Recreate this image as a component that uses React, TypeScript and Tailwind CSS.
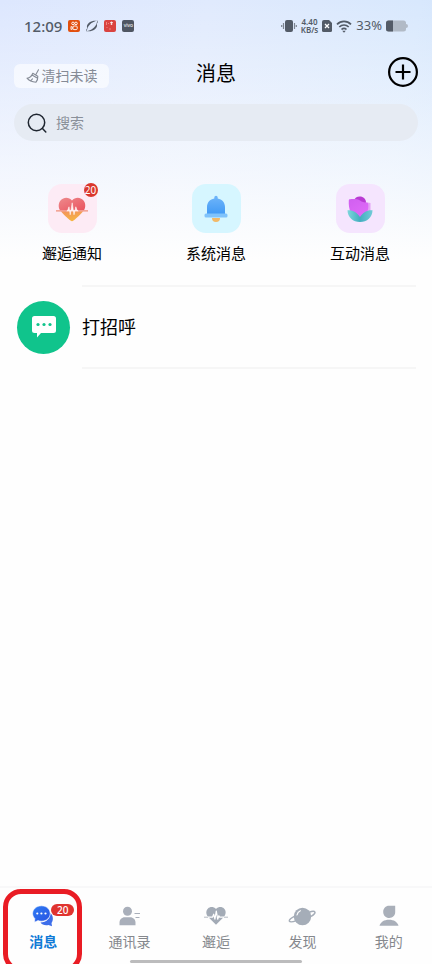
import type { ReactNode } from "react";

type Shortcut = { label: string; tile: string; icon: ReactNode; badge?: number };
type Tab = { label: string; icon: ReactNode; badge?: number; active?: boolean };

function HeartPulseIcon() {
  return (
    <svg viewBox="0 0 34 26" className="h-[26px] w-[34px]" fill="none">
      <defs>
        <linearGradient id="heart-top" x1="0" y1="0" x2="1" y2="1">
          <stop offset="0" stopColor="#ee8a8c" />
          <stop offset="1" stopColor="#ea5460" />
        </linearGradient>
        <linearGradient id="heart-bottom" x1="0" y1="0" x2="0.3" y2="1">
          <stop offset="0" stopColor="#f3935c" />
          <stop offset="1" stopColor="#f5b542" />
        </linearGradient>
      </defs>
      <path d="M5 14.200C3 11 3.500 7 5.500 4.500 9 .5 14 1 17 4.500c3-3.500 8-4 11.500 0 2 2.500 2.500 6.500.5 9.700z" fill="url(#heart-top)" />
      <path d="M6 15.200h22c-1.500 2.300-6 6.500-9.500 9.400-1 .8-2 .8-3 0C12 21.700 7.500 17.500 6 15.200z" fill="url(#heart-bottom)" />
      <path d="M11 14.800h1.500l1.500-4 1.200 8 2-12 1.800 12 1.800-8 1.500 4H24z" fill="#fff5f3" stroke="#fff5f3" strokeWidth="0.600" strokeLinejoin="round" />
      <path d="M1 14.800h11M23 14.800h10" stroke="#f0907a" strokeWidth="1.300" />
    </svg>
  );
}

function BellIcon() {
  return (
    <svg viewBox="0 0 24 28" className="h-7 w-6">
      <defs>
        <linearGradient id="bell" x1="0" y1="0" x2="0" y2="1">
          <stop offset="0" stopColor="#70b6fa" />
          <stop offset="1" stopColor="#429af5" />
        </linearGradient>
      </defs>
      <path d="M8 23h8a4 4 0 0 1-8 0z" fill="#f2b968" />
      <path d="M10.300 2.500a1.700 1.700 0 1 1 3.400 0v1C18 4.300 21 7.500 21 12v7H3v-7c0-4.500 3-7.700 7.300-8.500z" fill="url(#bell)" />
      <rect x="0.500" y="18.500" width="23" height="4" rx="1.500" fill="#80c3fb" />
    </svg>
  );
}

function TulipIcon() {
  return (
    <svg viewBox="0 0 26 26" className="h-[26px] w-[26px]">
      <defs>
        <linearGradient id="petal" x1="0" y1="0" x2="0.600" y2="1">
          <stop offset="0" stopColor="#d05ff0" />
          <stop offset="1" stopColor="#e06bf8" />
        </linearGradient>
        <linearGradient id="leaf" x1="0" y1="0" x2="1" y2="0">
          <stop offset="0" stopColor="#7ed6dc" />
          <stop offset="0.500" stopColor="#43aebf" />
          <stop offset="1" stopColor="#72cbd8" />
        </linearGradient>
      </defs>
      <path d="M7 5c1-6 11-6 12 1v4H7z" fill="#b93bd3" />
      <path d="M17 7c2-.8 5-.8 6.500 0v8.500L18 17z" fill="#e4a2f5" />
      <path d="M3 3.300c4-.5 8 0 10 1.200 2 1.500 4 2 6.500 2 1 0 1.500.5 1.700 1.500.4 3 0 6-1.200 8.500l-6.500 6L4 17C2 13 1.500 8.500 1.800 4.500c0-.7.500-1.200 1.200-1.200z" fill="url(#petal)" />
      <path d="M.5 14.200c5-.5 9.500 2 12.500 6.800 3-4.800 7.500-7.300 12.500-6.800 0 7-5.500 11.800-12.500 11.800S.5 21.200.5 14.200z" fill="url(#leaf)" />
    </svg>
  );
}

function ChatTabIcon() {
  return (
    <svg viewBox="0 0 22 22" className="h-[22px] w-[22px]">
      <defs>
        <linearGradient id="chat" x1="0" y1="0" x2="1" y2="1">
          <stop offset="0" stopColor="#2f7df5" />
          <stop offset="1" stopColor="#2851e0" />
        </linearGradient>
      </defs>
      <path d="M18.500 8c3 3 3 7.500 1 10l.5 3.300-3.500-1.300c-3 .8-6.500 0-8-2.500 6 0 9.500-4 10-9.500z" fill="#3d6eea" />
      <path d="M9.500.8c5 0 8.700 3.400 8.700 7.700s-3.700 7.700-8.700 7.700c-1.300 0-2.400-.2-3.500-.6l-3.500 1.600.3-3.700C1.500 12.200.6 10.500.6 8.500.6 4.200 4.500.8 9.500.8z" fill="url(#chat)" stroke="#fff" strokeWidth="0.600" />
      <circle cx="5.300" cy="8.500" r="1.100" fill="#fff" />
      <circle cx="9.400" cy="8.500" r="1.100" fill="#fff" />
      <circle cx="13.500" cy="8.500" r="1.100" fill="#fff" />
    </svg>
  );
}

function ContactsIcon() {
  return (
    <svg viewBox="0 0 22 20" className="h-5 w-[22px]" fill="#a9afba">
      <circle cx="8.500" cy="5.300" r="4.500" />
      <path d="M.5 19.200v-2.700c0-3 2.300-5.300 5.300-5.300h5.400c3 0 5.300 2.300 5.300 5.300v2.700z" />
      <path d="M15.500 7.500h5.500M16.500 11.500h4" stroke="#a9afba" strokeWidth="1.200" />
    </svg>
  );
}

function EncounterIcon() {
  return (
    <svg viewBox="0 0 24 20" className="h-5 w-6" fill="none">
      <path d="M12 3C14.500.3 18 .5 20 2.500c2.500 2.500 2 6-.2 8.500L12 18.800 4.200 11C2 8.500 1.500 5 4 2.500c2-2 5.500-2.200 8 .5z" fill="#a3abb6" />
      <path d="M3 11.200h5.500l1.200-3 1.200 5 1.400-8 1.400 8 1.200-3.500.8 1.500H21" stroke="#fff" strokeWidth="1.200" strokeLinejoin="round" />
      <path d="M0 11.200h4M20 11.200h4" stroke="#b4bac3" strokeWidth="1" />
    </svg>
  );
}

function PlanetIcon() {
  return (
    <svg viewBox="0 0 28 20" className="h-5 w-7" fill="none">
      <circle cx="14.500" cy="10.500" r="8.700" fill="#a5adb8" />
      <path d="M21 6.200c3-1 5.300-1.200 5.800-.3.600 1-.8 2.700-3.300 4.300M6.800 10.200C3 12.200 1 14 1.400 15.100c.5 1 3.300.8 7-.5" stroke="#a5adb8" strokeWidth="1.500" strokeLinecap="round" />
      <path d="M9 9c.4-2.100 1.600-3.500 3.400-4.200" stroke="#fff" strokeWidth="1.200" strokeLinecap="round" />
    </svg>
  );
}

function MineIcon() {
  return (
    <svg viewBox="0 0 20 22" className="h-[22px] w-5" fill="#a9afb9">
      <path d="M10 .8h6.200v6.400c0 3.300-2.600 5.700-5.900 5.700-3.400 0-6.100-2.600-6.100-6C4.200 3.500 6.700.8 10 .8z" />
      <path d="M.5 20.800c1.200-3.900 4.500-6 9.500-6s8.300 2.100 9.500 6z" />
    </svg>
  );
}

const shortcuts: Shortcut[] = [
  { label: "邂逅通知", tile: "bg-[#fdebf5]", icon: <HeartPulseIcon />, badge: 20 },
  { label: "系统消息", tile: "bg-[#d6f6ff]", icon: <BellIcon /> },
  { label: "互动消息", tile: "bg-[#f5e5fe]", icon: <TulipIcon /> },
];

const tabs: Tab[] = [
  { label: "消息", icon: <ChatTabIcon />, badge: 20, active: true },
  { label: "通讯录", icon: <ContactsIcon /> },
  { label: "邂逅", icon: <EncounterIcon /> },
  { label: "发现", icon: <PlanetIcon /> },
  { label: "我的", icon: <MineIcon /> },
];

function StatusBar() {
  return (
    <div className="flex h-[52px] items-center justify-between px-6 text-[#535b67]">
      <div className="flex items-center gap-1.5">
        <span className="text-[15px] font-medium">12:09</span>
        <svg viewBox="0 0 12 12" className="h-3 w-3" fill="none" stroke="#fff" strokeWidth="0.900">
          <rect width="12" height="12" rx="2" fill="#e2500f" stroke="none" />
          <circle cx="5" cy="3.400" r="1.300" />
          <circle cx="8" cy="3.400" r="1.300" />
          <rect x="5" y="6" width="4.200" height="3.600" rx="1" />
          <path d="m5 7.500-2-1v3l2-1" />
        </svg>
        <svg viewBox="0 0 12 12" className="h-3 w-3" fill="currentColor">
          <path d="M1.300 8.500C-.5 4 4.500-.2 11.600.8 6.500 1.500 3 4.500 1.300 8.500z" />
          <path d="M10.700 3.500C12.500 8 7.500 12.200.4 11.200 5.500 10.500 9 7.500 10.700 3.500z" />
          <path d="M11.600.8c.3.800-.2 1.800-.9 2.700M.4 11.200c-.3-.8.200-1.800.9-2.700" fill="none" stroke="currentColor" strokeWidth="0.800" />
        </svg>
        <svg viewBox="0 0 12 12" className="h-3 w-3" fill="none">
          <rect width="12" height="12" rx="2" fill="#da4340" />
          <path d="M2.500 2v3M4.500 3v1M2.500 7.500h1M5 9h2" stroke="#f29a91" strokeWidth="0.800" />
          <path d="M6 2.500h3M6.500 4h2M7.500 1.500V5" stroke="#fff" strokeWidth="0.700" />
        </svg>
        <span className="flex h-3 w-3 items-center justify-center rounded-xs bg-[#4f5662] text-[5px] text-white">vivo</span>
      </div>
      <div className="flex items-center gap-1">
        <svg viewBox="0 0 16 14" className="h-3.5 w-4" fill="#535b67">
          <rect x="4" y="1" width="8" height="12" rx="2" />
          <path d="M2.500 4v6M13.500 4v6M.7 6v2M15.300 6v2" stroke="#7c8490" strokeWidth="1.200" />
        </svg>
        <span className="flex flex-col items-center text-[8px] leading-2 font-semibold">
          <span>4.40</span>
          <span>KB/s</span>
        </span>
        <svg viewBox="0 0 10 12" className="h-3 w-2.5">
          <path d="M2 0h5l3 3v7.500A1.500 1.500 0 0 1 8.500 12h-7A1.500 1.500 0 0 1 0 10.500V2a2 2 0 0 1 2-2z" fill="#535b67" />
          <path d="m3 4 4 4M7 4 3 8" stroke="#fff" strokeWidth="1.300" />
        </svg>
        <svg viewBox="0 0 16 13" className="h-[13px] w-4" fill="none" stroke="#535b67" strokeWidth="1.700">
          <path d="M1 4.300c4-4 10-4 14 0M3.300 7c2.700-2.700 6.700-2.700 9.400 0M5.500 9.500c1.500-1.400 3.500-1.400 5 0" />
          <path d="m8 12.800-1.800-2h3.600z" fill="#535b67" stroke="none" />
        </svg>
        <span className="text-[13px]">33%</span>
        <svg viewBox="0 0 22 12" className="h-3 w-[22px]">
          <rect x="0" y="0.500" width="20" height="11" rx="2.500" fill="#b1bac6" />
          <path d="M2.500.5H7v11H2.500A2.500 2.500 0 0 1 0 9V3A2.500 2.500 0 0 1 2.500.5z" fill="#535b67" />
          <path d="M20 4a2 2 0 0 1 0 4z" fill="#b1bac6" />
        </svg>
      </div>
    </div>
  );
}

function Header() {
  return (
    <header className="grid grid-cols-3 items-end px-3.5 pt-1">
      <button type="button" className="flex h-6 w-[95px] items-center justify-center gap-0.5 justify-self-start rounded-md bg-white/60 text-sm text-[#858b96]">
        <svg viewBox="0 0 14 14" className="h-3.5 w-3.5" fill="none" stroke="currentColor" strokeWidth="1.100" strokeLinecap="round" strokeLinejoin="round">
          <path d="M12.500.8 10 5.200M6.800 4.200l5 3c.2 2.300-.5 4.400-1.800 6C6 13 2.800 11.500 1 9.200c2.600-.3 4.700-2 5.800-5zM4.500 11.800l2-2M6 6l5.600 3.300" />
        </svg>
        清扫未读
      </button>
      <h1 className="justify-self-center text-xl text-black">消息</h1>
      <button type="button" aria-label="添加" className="justify-self-end">
        <svg viewBox="0 0 32 32" className="h-8 w-8" fill="none" stroke="#000" strokeWidth="2.200">
          <circle cx="17" cy="16" r="13.900" />
          <path d="M17 8.500v15M9.500 16h15" />
        </svg>
      </button>
    </header>
  );
}

function SearchBox() {
  return (
    <label className="mx-3.5 mt-4 flex h-[37px] items-center gap-2 rounded-full bg-[#e6ebf3] px-3">
      <svg viewBox="0 0 22 22" className="h-[22px] w-[22px] shrink-0" fill="none" stroke="#1f2630" strokeWidth="1.500" strokeLinecap="round">
        <circle cx="10.500" cy="10.500" r="8.200" />
        <path d="m16.500 16.500 3.300 3.500" />
      </svg>
      <input
        type="search"
        aria-label="搜索"
        placeholder="搜索"
        className="min-w-0 flex-1 bg-transparent text-sm outline-none placeholder:text-[#8a909a]"
      />
    </label>
  );
}

export default function App() {
  return (
    <div className="flex min-h-screen flex-col bg-[#fefefe] bg-[linear-gradient(to_bottom,transparent_0,#fefefe_260px),linear-gradient(100deg,#dde7fe_0%,#e0eafd_35%,#d8e8fd_70%,#c6dcfa_100%)] font-['Noto_Sans','Noto_Sans_CJK_SC',sans-serif]">
      <StatusBar />
      <Header />
      <SearchBox />

      <main className="flex-1">
        <section className="grid grid-cols-3 pt-[43px]">
          {shortcuts.map((item) => (
            <button key={item.label} type="button" className="flex flex-col items-center gap-2 text-[15px] leading-6 text-black">
              <span className={`relative flex h-[49px] w-[49px] items-center justify-center rounded-[14px] ${item.tile}`}>
                {item.icon}
                {item.badge ? (
                  <span className="absolute -top-px -right-px flex h-3.5 w-3.5 items-center justify-center rounded-full bg-[#da372d] text-[10px] leading-none text-white">
                    {item.badge}
                  </span>
                ) : null}
              </span>
              {item.label}
            </button>
          ))}
        </section>

        <div className="mt-5 mr-4 ml-[82px] h-0.5 bg-[#f6f6f6]" />
        <button type="button" className="flex h-20 w-full items-center gap-3 pr-4 pl-[17px] text-left">
          <span className="flex h-[53px] w-[53px] items-center justify-center rounded-full bg-[#10c48c]">
            <svg viewBox="0 0 24 22" className="h-[22px] w-6">
              <path d="M2.500 0h19A2.500 2.500 0 0 1 24 2.500v12a2.500 2.500 0 0 1-2.500 2.500H9l-4 4.500V17H2.500A2.500 2.500 0 0 1 0 14.500v-12A2.500 2.500 0 0 1 2.500 0z" fill="#fff" />
              <circle cx="6" cy="8.500" r="1.600" fill="#10c48c" />
              <circle cx="12" cy="8.500" r="1.600" fill="#10c48c" />
              <circle cx="18" cy="8.500" r="1.600" fill="#10c48c" />
            </svg>
          </span>
          <span className="text-lg text-black">打招呼</span>
        </button>
        <div className="mr-4 ml-[82px] h-0.5 bg-[#f6f6f6]" />
      </main>

      <nav className="overflow-hidden border-t-2 border-[#f8f8f9] bg-[#fefefe]">
        <div className="grid grid-cols-5">
          {tabs.map((tab) => (
            <a
              key={tab.label}
              href="#"
              className={`relative flex flex-col items-center gap-0.5 pt-4 pb-1.5 text-sm leading-6 ${tab.active ? "font-bold text-[#0f7ad6]" : "text-[#85888d]"}`}
            >
              {tab.active ? (
                <span className="absolute top-px right-1 -bottom-3 left-[3px] rounded-[18px] border-5 border-[#e91c24]" />
              ) : null}
              <span className="relative flex h-6 items-center">
                {tab.icon}
                {tab.badge ? (
                  <span className="absolute top-0 left-[19px] flex h-3 w-[23px] items-center justify-center rounded-full bg-[#e0332f] text-[10px] leading-none font-medium text-white">
                    {tab.badge}
                  </span>
                ) : null}
              </span>
              {tab.label}
            </a>
          ))}
        </div>
        <div className="mx-auto mb-px h-[3px] w-2/5 rounded-full bg-[#bcbcbd]" />
      </nav>
    </div>
  );
}
